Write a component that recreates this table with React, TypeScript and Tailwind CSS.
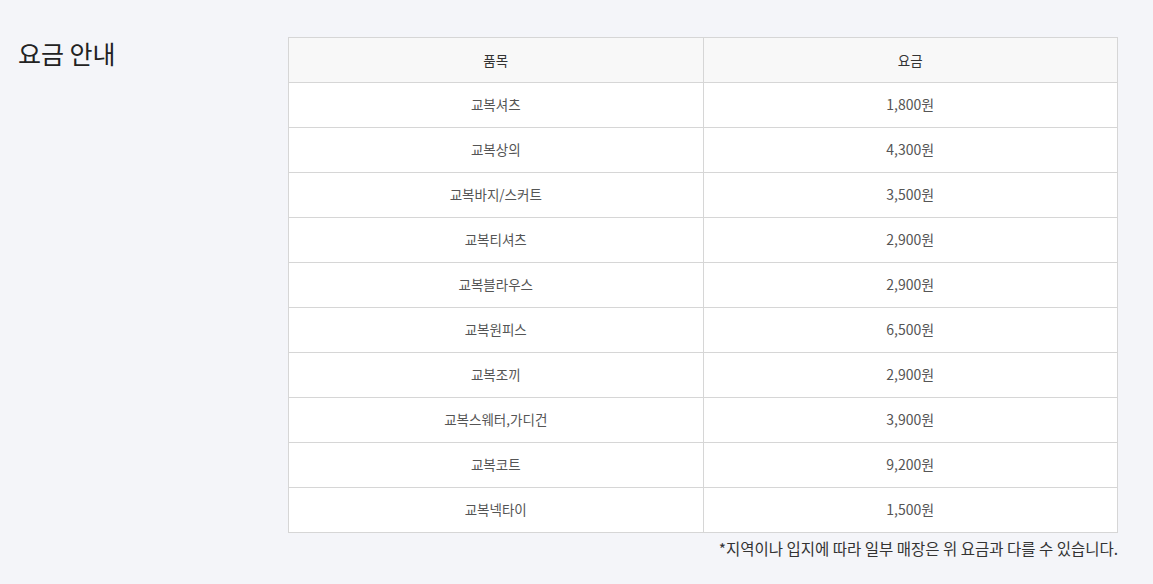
const rows: [string, string][] = [
  ["교복셔츠", "1,800원"],
  ["교복상의", "4,300원"],
  ["교복바지/스커트", "3,500원"],
  ["교복티셔츠", "2,900원"],
  ["교복블라우스", "2,900원"],
  ["교복원피스", "6,500원"],
  ["교복조끼", "2,900원"],
  ["교복스웨터,가디건", "3,900원"],
  ["교복코트", "9,200원"],
  ["교복넥타이", "1,500원"],
];

export default function App() {
  return (
    <div
      className="min-h-[584px] bg-[#f4f5f9] text-[#333]"
      style={{ fontFamily: '"Noto Sans CJK KR", "Noto Sans", sans-serif' }}
    >
      <div className="flex pl-[18px] pr-[35px] pt-[37px]">
        {/* title */}
        <div className="w-[270px] shrink-0">
          <h2 className="mt-[-1px] text-[25px] leading-[34px] font-normal text-[#222]">
            요금 안내
          </h2>
        </div>

        {/* price table */}
        <div className="flex-1">
          <table className="w-full border-collapse bg-white text-[13.5px]">
            <thead>
              <tr className="h-[45px] bg-[#f8f8f8]">
                <th className="w-1/2 border border-[#d6d6d6] font-normal text-[#333]">품목</th>
                <th className="w-1/2 border border-[#d6d6d6] font-normal text-[#333]">요금</th>
              </tr>
            </thead>
            <tbody>
              {rows.map(([item, price]) => (
                <tr key={item} className="h-[45px]">
                  <td className="border border-[#d6d6d6] pb-[2px] text-center text-[#555]">{item}</td>
                  <td className="border border-[#d6d6d6] pb-[2px] text-center text-[14px] text-[#555]">{price}</td>
                </tr>
              ))}
            </tbody>
          </table>
          <p className="mt-[5px] text-right text-[15.5px] leading-[20px] text-[#333]">
            *지역이나 입지에 따라 일부 매장은 위 요금과 다를 수 있습니다.
          </p>
        </div>
      </div>
    </div>
  );
}
